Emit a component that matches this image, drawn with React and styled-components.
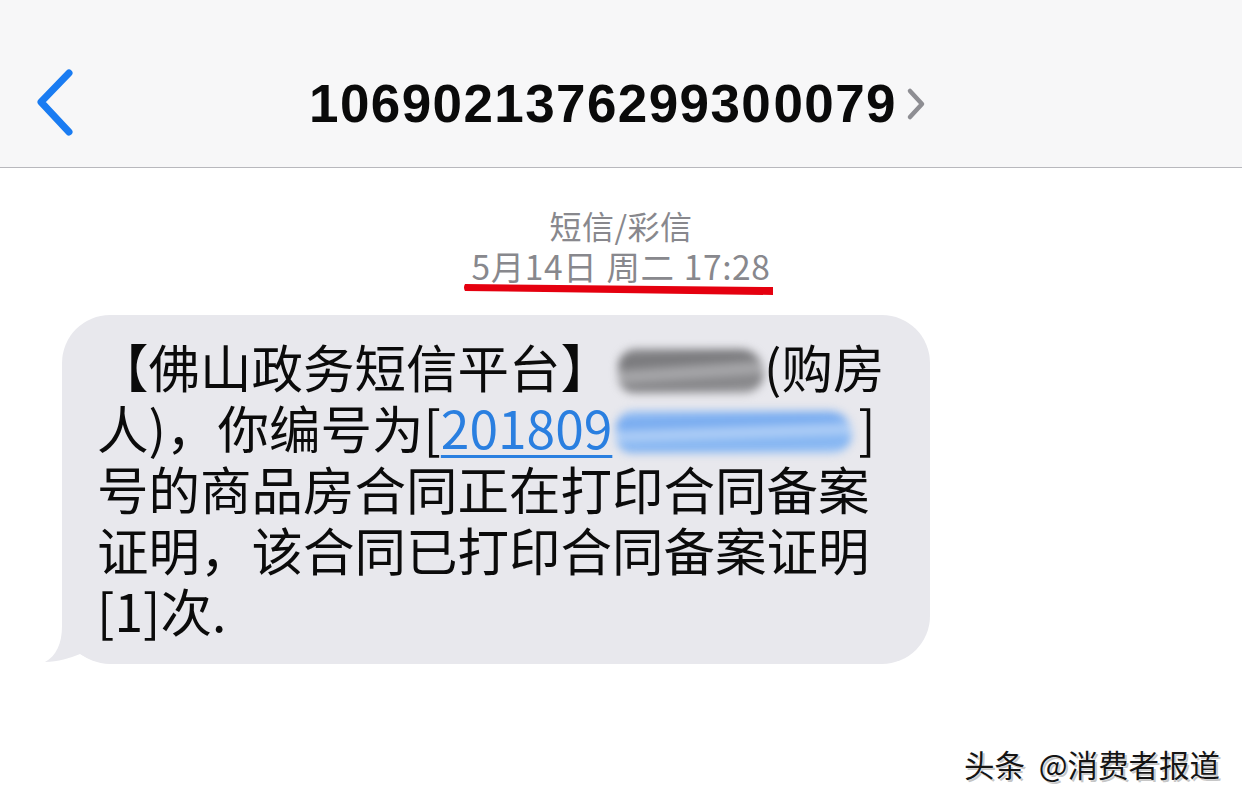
import styled, { createGlobalStyle } from 'styled-components';

const GlobalStyle = createGlobalStyle`
  html, body {
    margin: 0;
    padding: 0;
    background: #ffffff;
  }
  body {
    width: 1242px;
    height: 804px;
    overflow: hidden;
    font-family: "Noto Sans CJK SC", "Noto Sans", sans-serif;
  }
`;

function BackIcon() {
  return (
    <svg width='40' height='68' viewBox='0 0 40 68'>
      <path
        d='M33 4 L5 33 L33 63'
        fill='none'
        stroke='#1a7cf2'
        strokeWidth='7'
        strokeLinecap='round'
        strokeLinejoin='round'
      />
    </svg>
  );
}

function DetailIcon() {
  return (
    <svg width='22' height='34' viewBox='0 0 22 34'>
      <path
        d='M5 4 L17 17 L5 30'
        fill='none'
        stroke='#8e8e93'
        strokeWidth='4.5'
        strokeLinecap='round'
        strokeLinejoin='round'
      />
    </svg>
  );
}

function RedMark() {
  return (
    <svg width='312' height='12' viewBox='0 0 312 12'>
      <path d='M2 1 L310 4 L310 12 L2 8 Q0 4.5 2 1 Z' fill='#e5000f' />
    </svg>
  );
}

function Tail() {
  return (
    <TailSvg width='70' height='50' viewBox='0 0 70 50'>
      <path
        d='M18 0 L18 12 C18 30 12 42 1 48 C14 48 26 44 36 40 C46 46 56 49 70 50 L70 0 Z'
        fill='#e8e8ed'
      />
    </TailSvg>
  );
}

export default function App() {
  return (
    <>
      <GlobalStyle />
      <Page>
        <Header>
          <BackCell>
            <BackIcon />
          </BackCell>
          <TitleGroup>
            <Title>106902137629930 0079</Title>
            <DetailIcon />
          </TitleGroup>
          <div />
        </Header>

        <Meta>
          <MetaLine>短信/彩信</MetaLine>
          <MetaLine $large>5月14日 周二 17:28</MetaLine>
          <MarkRow>
            <RedMark />
          </MarkRow>
        </Meta>

        <Bubble>
          <Tail />
          <BubbleText>
            【佛山政务短信平台】<Smudge $tone='gray' />(购房
            <br />
            人)，你编号为[<Link>201809</Link>
            <Smudge $tone='blue' />]
            <br />
            号的商品房合同正在打印合同备案
            <br />
            证明，该合同已打印合同备案证明
            <br />
            [1]次.
          </BubbleText>
        </Bubble>

        <Footer>
          <Watermark>头条&nbsp;&nbsp;@消费者报道</Watermark>
        </Footer>
      </Page>
    </>
  );
}

const Page = styled.div`
  display: flex;
  flex-direction: column;
  min-height: 804px;
`;

const Header = styled.header`
  height: 168px;
  box-sizing: border-box;
  padding-top: 38px;
  background: #f7f7f8;
  border-bottom: 1.5px solid #b8b8bd;
  display: grid;
  grid-template-columns: 1fr auto 1fr;
  align-items: center;
`;

const BackCell = styled.div`
  display: flex;
  align-items: center;
  padding-left: 36px;
`;

const TitleGroup = styled.div`
  display: flex;
  align-items: center;
  gap: 8px;
  padding-top: 2px;
  padding-right: 6px;
`;

const Title = styled.h1`
  margin: 0;
  font-family: "Liberation Sans", Arial, sans-serif;
  font-weight: 700;
  font-size: 53px;
  letter-spacing: 1.4px;
  color: #0a0a0a;
  word-spacing: -15px;
  line-height: 1;
`;

const Meta = styled.div`
  display: flex;
  flex-direction: column;
  align-items: center;
  padding-top: 37px;
`;

const MetaLine = styled.div`
  font-size: ${(p) => (p.$large ? '33.5px' : '32px')};
  line-height: ${(p) => (p.$large ? '39px' : '41px')};
  color: #88888d;
  letter-spacing: ${(p) => (p.$large ? '0.6px' : '0.5px')};
  word-spacing: ${(p) => (p.$large ? '1px' : '0')};
`;

const MarkRow = styled.div`
  display: flex;
  margin-top: -2px;
  margin-left: -4px;
  line-height: 0;
`;

const Bubble = styled.div`
  position: relative;
  margin: 20px 0 0 62px;
  width: 868px;
  box-sizing: border-box;
  padding: 20px 30px 24px 35px;
  background: #e8e8ed;
  border-radius: 48px;
`;

const TailSvg = styled.svg`
  position: absolute;
  left: -18px;
  bottom: 0;
`;

const BubbleText = styled.p`
  position: relative;
  margin: 0;
  font-size: 51.5px;
  line-height: 61px;
  color: #0b0b0b;
  white-space: nowrap;
`;

const Link = styled.span`
  color: #2a7fe0;
  text-decoration: underline;
  text-decoration-thickness: 3px;
  text-underline-offset: 6px;
`;

const Smudge = styled.span`
  display: inline-block;
  vertical-align: middle;
  margin-top: -6px;
  width: ${(p) => (p.$tone === 'gray' ? '146px' : '236px')};
  height: ${(p) => (p.$tone === 'gray' ? '44px' : '42px')};
  margin-left: ${(p) => (p.$tone === 'gray' ? '6px' : '4px')};
  margin-right: ${(p) => (p.$tone === 'gray' ? '0' : '6px')};
  border-radius: 18px 24px 20px 16px;
  filter: blur(4px);
  background: ${(p) =>
    p.$tone === 'gray'
      ? 'linear-gradient(176deg, #8c8c8f 0%, #757578 30%, #b0b0b3 52%, #808083 75%, #a2a2a5 100%)'
      : 'linear-gradient(178deg, #9fc4f4 0%, #6fa6ef 30%, #b9d4f7 50%, #7cb0f1 75%, #a4c8f5 100%)'};
`;

const Footer = styled.footer`
  margin-top: auto;
  display: flex;
  justify-content: flex-end;
  padding: 0 22px 22px 0;
`;

const Watermark = styled.div`
  font-size: 30.5px;
  line-height: 36px;
  color: #151515;
  text-shadow: 0 0 2px #ffffff, 2px 2px 0 #c4c4c4;
`;
